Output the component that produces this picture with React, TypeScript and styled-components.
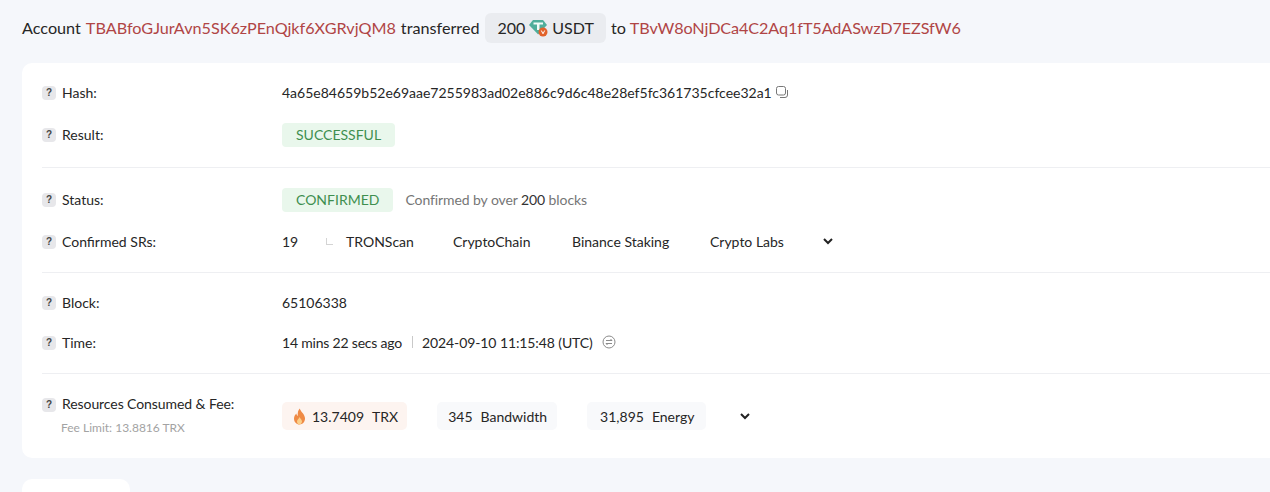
import React from "react";
import styled, { createGlobalStyle } from "styled-components";

const Global = createGlobalStyle`
  html, body { margin: 0; padding: 0; background: #f5f7fb; }
  body { font-family: Lato, "Open Sans", sans-serif; color: #262626; overflow: hidden; height: 492px; width: 1270px; }
`;

const Page = styled.div`
  height: 492px;
  width: 1270px;
  overflow: hidden;
  padding-left: 22px;
  box-sizing: border-box;
`;

const Headline = styled.div`
  display: flex;
  align-items: center;
  height: 63px;
  padding-bottom: 8px;
  box-sizing: border-box;
  font-size: 16.2px;
  white-space: pre;
`;

const Addr = styled.span`
  color: #b04545;
  margin: 0 5px;
`;

const ToAddr = styled(Addr)`
  margin-left: 4px;
  letter-spacing: -0.09px;
`;

const TokenPill = styled.span`
  display: inline-flex;
  align-items: center;
  height: 30px;
  padding: 0 12px 0 13px;
  margin: 0 5px 0 5px;
  background: #eaecf0;
  border-radius: 6px;
  font-size: 16px;
`;

const TokenIcon = styled.svg`
  width: 19px;
  height: 19px;
  margin: 0 4px 0 4px;
`;

const Card = styled.section`
  width: 1290px;
  height: 395px;
  background: #fff;
  border-radius: 10px;
  padding: 9px 20px 0;
  box-sizing: border-box;
`;

const Group = styled.div<{ $pad: number; $gap: number }>`
  padding-bottom: ${(p) => p.$pad}px;
  margin-bottom: ${(p) => p.$gap}px;
  border-bottom: 1px solid #eeeff2;
  width: 1228px;
`;

const LastGroup = styled.div`
  width: 1228px;
  display: flex;
  align-items: flex-start;
  padding-top: 10px;
`;

const Row = styled.div<{ $h: number }>`
  display: flex;
  align-items: center;
  height: ${(p) => p.$h}px;
  font-size: 14px;
`;

const Label = styled.div`
  width: 240px;
  flex: none;
  display: flex;
  align-items: center;
  gap: 6px;
  padding-bottom: 2px;
  box-sizing: border-box;
  font-size: 14px;
`;

const Help = styled.span`
  width: 14px;
  height: 14px;
  margin-top: 2px;
  border-radius: 4px;
  background: #e7e7ea;
  color: #444;
  font: 700 10px/14px "Liberation Sans", sans-serif;
  text-align: center;
  flex: none;
`;

const Value = styled.div`
  display: flex;
  align-items: center;
  padding-bottom: 2px;
  font-size: 14px;
  white-space: pre;
`;

const Status = styled.span`
  display: inline-flex;
  align-items: center;
  box-sizing: border-box;
  height: 24px;
  padding: 0 14px 2px;
  transform: translateY(1px);
  border-radius: 4px;
  background: #e9f7ec;
  color: #3f8f4f;
  font-size: 14px;
`;

const Muted = styled.span`
  color: #767676;
  margin-left: 12px;
  letter-spacing: -0.09px;
`;

const Strong = styled.span`
  color: #333;
`;

const Count = styled.span`
  width: 44px;
`;

const Elbow = styled.span`
  width: 6px;
  height: 6px;
  border-left: 1px solid #d4d4d4;
  border-bottom: 1px solid #d4d4d4;
  margin-right: 13px;
`;

const Sr = styled.span<{ $w: number }>`
  width: ${(p) => p.$w}px;
`;

const Chevron = styled.svg`
  width: 14px;
  height: 14px;
  fill: none;
  stroke: #222;
  stroke-width: 2;
`;

const SrChevron = styled(Chevron)`
  margin-left: 0;
`;

const Ago = styled.span`
  letter-spacing: -0.2px;
`;

const Stamp = styled.span`
  letter-spacing: -0.1px;
`;

const Sep = styled.span`
  width: 1px;
  height: 12px;
  background: #c9c9c9;
  margin: 0 9px 0 10px;
`;

const ClockIcon = styled.svg`
  width: 14px;
  height: 14px;
  margin-left: 9px;
  fill: none;
  stroke: #8b8b8b;
`;

const CopyIcon = styled.svg`
  width: 14px;
  height: 14px;
  margin-left: 3px;
  fill: none;
  stroke: #777;
`;

const ResourceLabel = styled.div`
  width: 240px;
  flex: none;
  letter-spacing: -0.08px;
`;

const FeeLimit = styled.div`
  font-size: 12px;
  letter-spacing: 0;
  color: #a3a3a3;
  margin: 6px 0 0 19px;
`;

const Resources = styled.div`
  display: flex;
  align-items: center;
  gap: 30px;
  margin-top: 7px;
  font-size: 14px;
`;

const ResPill = styled.span<{ $bg: string; $l: number; $r: number }>`
  display: inline-flex;
  align-items: center;
  height: 28px;
  padding: 0 ${(p) => p.$r}px 0 ${(p) => p.$l}px;
  border-radius: 5px;
  background: ${(p) => p.$bg};
  white-space: pre;
`;

const ResNum = styled.span`
  margin-right: 8px;
`;

const Flame = styled.svg`
  width: 13px;
  height: 17px;
  margin-right: 6px;
`;

const ResChevron = styled(Chevron)`
  margin-left: 2px;
`;

const TabStub = styled.div`
  width: 108px;
  height: 40px;
  margin-top: 21px;
  background: #fff;
  border-radius: 10px;
`;

const ChevronDown = ({ as: C = Chevron }: { as?: typeof Chevron }) => (
  <C viewBox="0 0 14 14">
    <path d="M3 5l4 4 4-4" />
  </C>
);

const Question = () => <Help>?</Help>;

export default function App() {
  return (
    <Page>
      <Global />
      <Headline>
        Account
        <Addr>TBABfoGJurAvn5SK6zPEnQjkf6XGRvjQM8</Addr>
        transferred
        <TokenPill>
          200
          <TokenIcon viewBox="0 0 19 19">
            <path d="M4 2h10l4 5-8.800 9.500L0 7z" fill="#4fae9b" />
            <path d="M4.500 4.500h9.500v2h-3.500V12H8V6.500H4.500z" fill="#f2fbf8" />
            <circle cx="14" cy="14" r="4.500" fill="#e2622a" />
            <path d="M12.300 12.500l1.700 3.300 1.700-3.300" fill="none" stroke="#fff" strokeWidth="1" />
          </TokenIcon>
          USDT
        </TokenPill>
        to
        <ToAddr>TBvW8oNjDCa4C2Aq1fT5AdASwzD7EZSfW6</ToAddr>
      </Headline>
      <Card>
        <Group $pad={11} $gap={11}>
          <Row $h={42}>
            <Label><Question />Hash:</Label>
            <Value>
              4a65e84659b52e69aae7255983ad02e886c9d6c48e28ef5fc361735cfcee32a1
              <CopyIcon viewBox="0 0 14 14">
                <rect x="1.500" y="1.500" width="9" height="8.500" rx="2" />
                <path d="M12.500 5v5a2.500 2.500 0 0 1-2.500 2.500H5" />
              </CopyIcon>
            </Value>
          </Row>
          <Row $h={42}>
            <Label><Question />Result:</Label>
            <Value><Status>SUCCESSFUL</Status></Value>
          </Row>
        </Group>
        <Group $pad={9} $gap={10}>
          <Row $h={42}>
            <Label><Question />Status:</Label>
            <Value>
              <Status>CONFIRMED</Status>
              <Muted>Confirmed by over <Strong>200</Strong> blocks</Muted>
            </Value>
          </Row>
          <Row $h={42}>
            <Label><Question />Confirmed SRs:</Label>
            <Value>
              <Count>19</Count>
              <Elbow />
              <Sr $w={107}>TRONScan</Sr>
              <Sr $w={119}>CryptoChain</Sr>
              <Sr $w={138}>Binance Staking</Sr>
              <Sr $w={111}>Crypto Labs</Sr>
              <ChevronDown as={SrChevron} />
            </Value>
          </Row>
        </Group>
        <Group $pad={10} $gap={11}>
          <Row $h={40}>
            <Label><Question />Block:</Label>
            <Value>65106338</Value>
          </Row>
          <Row $h={40}>
            <Label><Question />Time:</Label>
            <Value>
              <Ago>14 mins 22 secs ago</Ago>
              <Sep />
              <Stamp>2024-09-10 11:15:48 (UTC)</Stamp>
              <ClockIcon viewBox="0 0 14 14">
                <circle cx="7" cy="7" r="6" />
                <path d="M4 5.500h6L8.500 4M10 8.500H4L5.500 10" />
              </ClockIcon>
            </Value>
          </Row>
        </Group>
        <LastGroup>
          <ResourceLabel>
            <Label><Question />Resources Consumed &amp; Fee:</Label>
            <FeeLimit>Fee Limit: 13.8816 TRX</FeeLimit>
          </ResourceLabel>
          <Resources>
            <ResPill $bg="#fdf4f0" $l={11} $r={9}>
              <Flame viewBox="0 0 13 17">
                <path d="M6.800.5c.5 3 4.700 5 5.200 9.500.3 3.700-2.500 6.500-5.500 6.500S1 14 1 10.500c0-2.300 1.300-3.800 2.300-5 .2 1.300.7 2 1.500 2.400C4.500 5 5 2.500 6.800.5z" fill="#ef8a45" />
                <path d="M6.500 9c.3 1.500 2.500 2.500 2.500 4.500 0 1.500-1.200 3-2.500 3s-2.500-1.300-2.500-3c0-2 2-2.800 2.500-4.500z" fill="#fbd08a" />
              </Flame>
              <ResNum>13.7409</ResNum>TRX
            </ResPill>
            <ResPill $bg="#f8f9fb" $l={11} $r={10}><ResNum>345</ResNum>Bandwidth</ResPill>
            <ResPill $bg="#f8f9fb" $l={13} $r={12}><ResNum>31,895</ResNum>Energy</ResPill>
            <ChevronDown as={ResChevron} />
          </Resources>
        </LastGroup>
      </Card>
      <TabStub />
    </Page>
  );
}
